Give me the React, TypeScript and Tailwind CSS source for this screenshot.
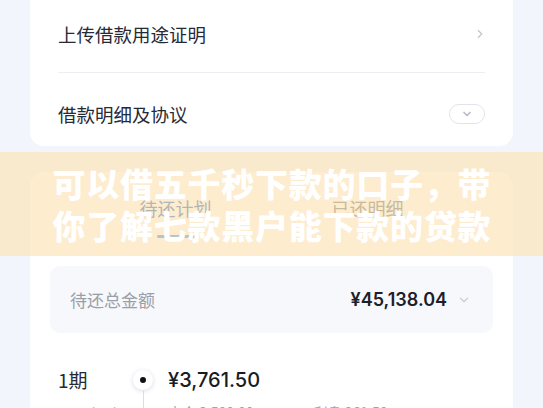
import React from "react";
import { ChevronRight, ChevronDown } from "lucide-react";

export default function App() {
  return (
    <div className="relative w-[543px] h-[408px] overflow-hidden bg-[#f2f5fb] font-['Noto_Sans_CJK_SC',sans-serif] text-[#262a36]">
      {/* top card */}
      <div className="mx-[30px] bg-white rounded-b-[14px] px-[28px]">
        <div className="h-[73px] pb-[5px] flex items-center justify-between border-b border-[#eceef3]">
          <span className="text-[18.5px] leading-[26px]">上传借款用途证明</span>
          <ChevronRight size={14} strokeWidth={2} className="text-[#c2c5cf] mr-[-2px]" />
        </div>
        <div className="pt-[28px] pb-[19px] flex items-center justify-between">
          <span className="text-[18.5px] leading-[26px]">借款明细及协议</span>
          <div className="w-[36px] h-[20px] rounded-full border border-[#e2e4eb] flex items-center justify-center">
            <ChevronDown size={12} strokeWidth={3.5} className="text-[#b9bdc8]" />
          </div>
        </div>
      </div>

      {/* plan card */}
      <div className="mx-[30px] mt-[26px] bg-white rounded-[14px] px-[20px] pb-[40px]">
        <div className="flex justify-center pt-[23px]">
          <div className="w-[192px] flex flex-col items-center">
            <span className="text-[18px] leading-[26px] text-[#1f5fb8]">待还计划</span>
            <div className="mt-[14px] w-[38px] h-[3px] rounded-full bg-[#2a8cf0]" />
          </div>
          <div className="w-[192px] flex flex-col items-center">
            <span className="text-[18px] leading-[26px] text-[#5f6b74]">已还明细</span>
          </div>
        </div>

        <div className="mt-[28px] h-[67px] rounded-[10px] bg-[#f7f8fb] flex items-center justify-between pl-[20px] pr-[22px]">
          <span className="text-[17px] text-[#9b9ea7]">待还总金额</span>
          <div className="flex items-center gap-[10px]">
            <span className="font-['Inter','Noto_Sans_CJK_SC',sans-serif] text-[18px] font-semibold text-[#1e2029]">¥45,138.04</span>
            <ChevronDown size={14} strokeWidth={2} className="text-[#c9ccd4]" />
          </div>
        </div>

        <div className="mt-[33px] flex pl-[8px]">
          <div className="w-[75px] flex flex-col">
            <span className="text-[19px] leading-[28px]">1期</span>
            <span className="mt-[8px] text-[14px] leading-[20px] text-[#a0a3ab]">2024/09/28</span>
          </div>
          <div className="w-[20px] flex flex-col items-center">
            <div className="mt-[4px] w-[20px] h-[20px] rounded-full bg-white shadow-[0_1px_5px_rgba(40,60,110,0.18)] flex items-center justify-center">
              <div className="w-[6px] h-[6px] rounded-full bg-[#111]" />
            </div>
            <div className="w-px h-[40px] bg-[#d9dde6]" />
          </div>
          <div className="ml-[15px] flex flex-col">
            <span className="font-['Inter','Noto_Sans_CJK_SC',sans-serif] text-[20px] leading-[28px] font-medium text-[#1a1c24]">¥3,761.50</span>
            <div className="mt-[8px] flex gap-[60px] text-[14px] leading-[20px] text-[#a0a3ab]">
              <span>本金 3,500.00</span>
              <span>利息 261.50</span>
            </div>
          </div>
        </div>
      </div>

      {/* title banner over the page */}
      <div className="absolute left-0 top-[152px] w-full h-[104px] bg-[rgba(252,226,180,0.66)] flex flex-col items-center justify-center">
        <div className="w-[438px] text-white font-black text-[33px] leading-[42px] text-justify [text-align-last:justify]">
          <div className="whitespace-nowrap">可以借五千秒下款的口子，带</div>
          <div className="whitespace-nowrap">你了解七款黑户能下款的贷款</div>
        </div>
      </div>
    </div>
  );
}
